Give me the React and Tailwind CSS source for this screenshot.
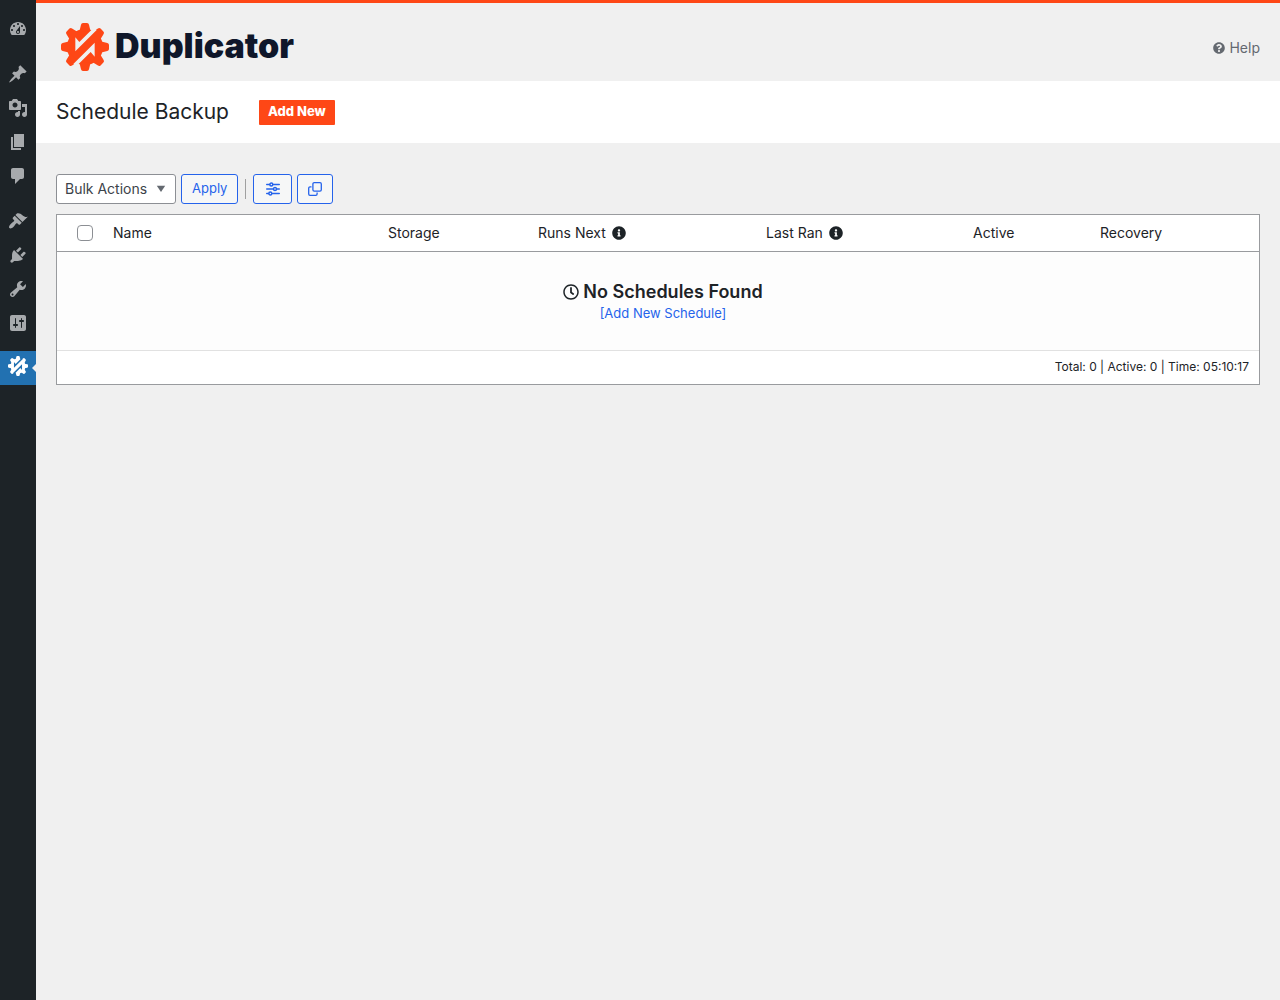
import { useState } from "react"
import { FaInfoCircle, FaQuestionCircle, FaRegClock } from "react-icons/fa"

const menuGroups = [
  [
    {
      name: "Dashboard",
      path: "M3.76 16h12.48c1.1-1.37 1.76-3.11 1.76-5 0-4.42-3.58-8-8-8s-8 3.58-8 8c0 1.89.66 3.63 1.76 5zM10 4c.55 0 1 .45 1 1s-.45 1-1 1-1-.45-1-1 .45-1 1-1zM6 6c.55 0 1 .45 1 1s-.45 1-1 1-1-.45-1-1 .45-1 1-1zm8 0c.55 0 1 .45 1 1s-.45 1-1 1-1-.45-1-1 .45-1 1-1zm-5.37 5.55L12 7v6c0 1.1-.9 2-2 2s-2-.9-2-2c0-.57.24-1.08.63-1.45zM4 10c.55 0 1 .45 1 1s-.45 1-1 1-1-.45-1-1 .45-1 1-1zm12 0c.55 0 1 .45 1 1s-.45 1-1 1-1-.45-1-1 .45-1 1-1zm-5 3c0-.55-.45-1-1-1s-1 .45-1 1 .45 1 1 1 1-.45 1-1z",
    },
  ],
  [
    {
      name: "Posts",
      path: "M10.44 3.02l1.82-1.82 6.36 6.35-1.83 1.82c-1.05-.68-2.48-.57-3.41.36l-.75.75c-.92.93-1.04 2.35-.35 3.41l-1.83 1.82-2.41-2.41-2.8 2.79c-.42.42-3.38 2.71-3.8 2.29s1.86-3.39 2.28-3.81l2.79-2.79L4.1 9.36l1.83-1.82c1.05.69 2.48.57 3.4-.36l.75-.75c.93-.92 1.05-2.35.36-3.41z",
    },
    {
      name: "Media",
      path: "M13 11V4c0-.55-.45-1-1-1h-1.67L9 1H5L3.67 3H2c-.55 0-1 .45-1 1v7c0 .55.45 1 1 1h10c.55 0 1-.45 1-1zM7 4.5c1.38 0 2.5 1.12 2.5 2.5S8.38 9.5 7 9.5 4.5 8.38 4.5 7 5.62 4.5 7 4.5zM14 6h5v10.5c0 1.38-1.12 2.5-2.5 2.5S14 17.88 14 16.5s1.12-2.5 2.5-2.5c.17 0 .34.02.5.05V9h-3V6zm-4 8.05V13h2v3.5c0 1.38-1.12 2.5-2.5 2.5S7 17.88 7 16.5 8.12 14 9.5 14c.17 0 .34.02.5.05z",
    },
    { name: "Pages", path: "M6 15V2h10v13H6zm-1 1h8v2H3V5h2v11z" },
    {
      name: "Comments",
      path: "M5 2h9c1.1 0 2 .9 2 2v7c0 1.1-.9 2-2 2h-2l-5 5v-5H5c-1.1 0-2-.9-2-2V4c0-1.1.9-2 2-2z",
    },
  ],
  [
    {
      name: "Appearance",
      path: "M14.48 11.06L7.41 3.99l1.5-1.5c.5-.56 2.3-.47 3.51.32 1.21.8 1.43 1.28 2.91 2.1 1.18.64 2.45 1.26 4.45.85zm-.71.71L6.7 4.7 4.93 6.47c-.39.39-.39 1.02 0 1.41l1.06 1.06c.39.39.39 1.03 0 1.42-.6.6-1.43 1.11-2.21 1.69-.35.26-.7.53-1.01.84C1.43 14.23.4 16.08 1.4 17.07c.99 1 2.84-.03 4.18-1.36.31-.31.58-.66.85-1.02.57-.78 1.08-1.61 1.69-2.21.39-.39 1.02-.39 1.41 0l1.06 1.06c.39.39 1.02.39 1.41 0z",
    },
    {
      name: "Plugins",
      path: "M13.11 4.36L9.87 7.6 8 5.73l3.24-3.24c.35-.34 1.05-.2 1.56.32.52.51.66 1.21.31 1.55zm-8 1.77l.91-1.12 9.01 9.01-1.19.84c-.71.71-2.63 1.16-3.82 1.16H6.14L4.9 17.26c-.59.59-1.54.59-2.12 0-.59-.58-.59-1.53 0-2.12l1.24-1.24v-3.88c0-1.13.4-3.19 1.09-3.89zm7.26 3.97l3.24-3.24c.34-.35 1.04-.21 1.55.31.52.51.66 1.21.31 1.55l-3.24 3.25z",
    },
    {
      name: "Tools",
      path: "M16.68 9.77c-1.34 1.34-3.3 1.67-4.95.99l-5.41 6.52c-.99.99-2.59.99-3.58 0s-.99-2.59 0-3.57l6.52-5.42c-.68-1.65-.35-3.61.99-4.95 1.28-1.28 3.12-1.62 4.72-1.06l-2.89 2.89 2.82 2.82 2.86-2.87c.53 1.58.18 3.39-1.08 4.65zM3.81 16.21c.4.39 1.04.39 1.43 0 .4-.4.4-1.04 0-1.43-.39-.4-1.03-.4-1.43 0-.39.39-.39 1.03 0 1.43z",
    },
    {
      name: "Settings",
      path: "M18 16V4c0-1.1-.9-2-2-2H4c-1.1 0-2 .9-2 2v12c0 1.1.9 2 2 2h12c1.1 0 2-.9 2-2zM8 11h1c.55 0 1 .45 1 1s-.45 1-1 1H8v1.5c0 .28-.22.5-.5.5s-.5-.22-.5-.5V13H6c-.55 0-1-.45-1-1s.45-1 1-1h1V5.5c0-.28.22-.5.5-.5s.5.22.5.5V11zm5-2h-1c-.55 0-1-.45-1-1s.45-1 1-1h1V5.5c0-.28.22-.5.5-.5s.5.22.5.5V7h1c.55 0 1 .45 1 1s-.45 1-1 1h-1v5.5c0 .28-.22.5-.5.5s-.5-.22-.5-.5V9z",
    },
  ],
]

const teeth = [0, 45, 90, 135, 180, 225, 270, 315]

function GearLogo({ className, cutClass }) {
  return (
    <svg viewBox="0 0 144 144" className={className} fill="currentColor" aria-hidden="true">
      <circle cx="72" cy="72" r="54" />
      {teeth.map((deg) => (
        <path key={deg} d="M55 26 L60 5 Q61 0 66 0 H78 Q83 0 84 5 L89 26 Z" transform={`rotate(${deg} 72 72)`} />
      ))}
      <g className={cutClass}>
        <path d="M98 14 L55 57 L43 43 V85 L107 21 Z" />
        <path d="M46 130 L89 87 L101 101 V59 L37 123 Z" />
      </g>
    </svg>
  )
}

function SlidersIcon() {
  return (
    <svg viewBox="0 0 14 14" className="size-[14px]" fill="none" stroke="currentColor" strokeWidth="1.4" strokeLinecap="round" aria-hidden="true">
      <path d="M.7 2.5h3M7 2.5h6.3M.7 7h6.6M10.6 7h2.7M.7 11.5h2M6 11.5h7.3" />
      <circle cx="5.3" cy="2.5" r="1.5" />
      <circle cx="9" cy="7" r="1.5" />
      <circle cx="4.3" cy="11.5" r="1.5" />
    </svg>
  )
}

function CloneIcon() {
  return (
    <svg viewBox="0 0 14 14" className="size-[14px]" fill="none" stroke="currentColor" strokeWidth="1.3" aria-hidden="true">
      <rect x="4.9" y=".7" width="8.4" height="8.4" rx="1.3" />
      <path d="M3.5 4.9H2A1.3 1.3 0 0 0 .7 6.2V12A1.3 1.3 0 0 0 2 13.3H7.8A1.3 1.3 0 0 0 9.1 12V10.5" />
    </svg>
  )
}

function Sidebar() {
  return (
    <nav className="w-9 shrink-0 bg-[#1d2327] pt-3 text-[#a7aaad]">
      {menuGroups.map((group, i) => (
        <ul key={i} className="mb-[11px]">
          {group.map((item) => (
            <li key={item.name}>
              <a href="#" aria-label={item.name} className="flex h-[34px] items-center justify-center hover:text-white">
                <svg viewBox="0 0 20 20" className="size-5" fill="currentColor" aria-hidden="true">
                  <path d={item.path} />
                </svg>
              </a>
            </li>
          ))}
        </ul>
      ))}
      <a href="#" aria-label="Duplicator" className="relative flex h-[34px] items-center justify-center bg-[#2271b1] pb-1 text-white">
        <GearLogo className="size-5" cutClass="text-[#2271b1]" />
        <span className="absolute right-0 top-[13px] border-y-4 border-r-4 border-y-transparent border-r-[#f0f0f0]" />
      </a>
    </nav>
  )
}

const outlineButton =
  "flex h-[30px] items-center justify-center rounded-[3px] border border-[#2563eb] bg-[#f6f7f7] px-[10px] text-[13px] text-[#2563eb] cursor-pointer"

export default function App() {
  const [action, setAction] = useState("")
  const [allChecked, setAllChecked] = useState(false)

  return (
    <div className="flex min-h-screen bg-[#f0f0f0] font-['Inter',sans-serif] text-[#1d2327]">
      <Sidebar />

      <div className="flex-1 min-w-0">
        {/* Brand bar */}
        <header className="flex h-[81px] items-center justify-between border-t-3 border-[#fe4716] px-5">
          <a href="#" className="flex items-center gap-[6px] pl-[5px] pt-[10px] text-[#fe4716]">
            <GearLogo className="size-12" cutClass="text-[#f0f0f0]" />
            <span className="pb-[2px] text-[34px] leading-[48px] font-black text-[#0f172a]">Duplicator</span>
          </a>
          <a href="#" className="flex items-center gap-1 pt-3 text-sm text-[#646970]">
            <FaQuestionCircle size={12} />
            Help
          </a>
        </header>

        {/* Page title */}
        <div className="flex h-[62px] items-center gap-[30px] bg-white px-5">
          <h1 className="text-[21px]">Schedule Backup</h1>
          <button className="h-[25px] rounded-[1px] bg-[#fe4716] px-[9px] text-[13px] font-extrabold text-white cursor-pointer">
            Add New
          </button>
        </div>

        <main className="px-5 pt-[31px]">
          {/* Toolbar */}
          <div className="flex items-center gap-[5px]">
            <div className="relative">
              <select
                aria-label="Bulk Actions"
                value={action}
                onChange={(e) => setAction(e.target.value)}
                className="block h-[30px] w-[120px] appearance-none rounded-[3px] border border-[#8c8f94] bg-white pl-2 pr-6 text-sm text-[#3c434a]"
              >
                <option value="">Bulk Actions</option>
                <option value="activate">Activate</option>
                <option value="deactivate">Deactivate</option>
                <option value="delete">Delete</option>
              </select>
              <svg viewBox="0 0 10 8" className="pointer-events-none absolute right-[10px] top-[11px] h-2 w-[10px] fill-[#646970]" aria-hidden="true">
                <path d="M.8 .8h8.4L5 7z" />
              </svg>
            </div>
            <button className={outlineButton}>Apply</button>
            <span className="mx-[2px] h-5 w-px bg-[#a0a0a0]" />
            <button aria-label="Settings" className={`${outlineButton} w-[39px]`}>
              <SlidersIcon />
            </button>
            <button aria-label="Templates" className={`${outlineButton} w-9`}>
              <CloneIcon />
            </button>
          </div>

          {/* Schedules */}
          <div className="mt-[10px] border border-[#999b9e] bg-white">
            <table className="w-full table-fixed text-left text-sm">
              <thead>
                <tr className="h-9 border-b border-[#999b9e]">
                  <th className="w-[46px] pl-5">
                    <input
                      type="checkbox"
                      aria-label="Select all"
                      checked={allChecked}
                      onChange={(e) => setAllChecked(e.target.checked)}
                      className="block size-4 appearance-none rounded-[4px] border border-[#8c8f94] bg-white checked:bg-[#2563eb]"
                    />
                  </th>
                  <th className="px-[10px] font-normal">Name</th>
                  <th className="w-[150px] px-[10px] font-normal">Storage</th>
                  <th className="w-[228px] px-[10px] font-normal">
                    <span className="flex items-center gap-[6px]">
                      Runs Next <FaInfoCircle size={14} />
                    </span>
                  </th>
                  <th className="w-[207px] px-[10px] font-normal">
                    <span className="flex items-center gap-[6px]">
                      Last Ran <FaInfoCircle size={14} />
                    </span>
                  </th>
                  <th className="w-[127px] px-[10px] font-normal">Active</th>
                  <th className="w-[169px] px-[10px] font-normal">Recovery</th>
                </tr>
              </thead>
              <tbody>
                <tr className="h-[99px] border-b border-[#e1e1e1] bg-[#fdfdfd]">
                  <td colSpan={7} className="pl-[10px] text-center">
                    <div className="flex items-center justify-center gap-1 text-lg leading-6 font-semibold">
                      <FaRegClock size={16} />
                      No Schedules Found
                    </div>
                    <a href="#" className="block text-[13px] leading-[18px] text-[#2563eb]">
                      [Add New Schedule]
                    </a>
                  </td>
                </tr>
              </tbody>
              <tfoot>
                <tr className="h-[34px]">
                  <td colSpan={7} className="px-[10px] text-right text-xs">
                    Total: 0 | Active: 0 | Time: 05:10:17
                  </td>
                </tr>
              </tfoot>
            </table>
          </div>
        </main>
      </div>
    </div>
  )
}
